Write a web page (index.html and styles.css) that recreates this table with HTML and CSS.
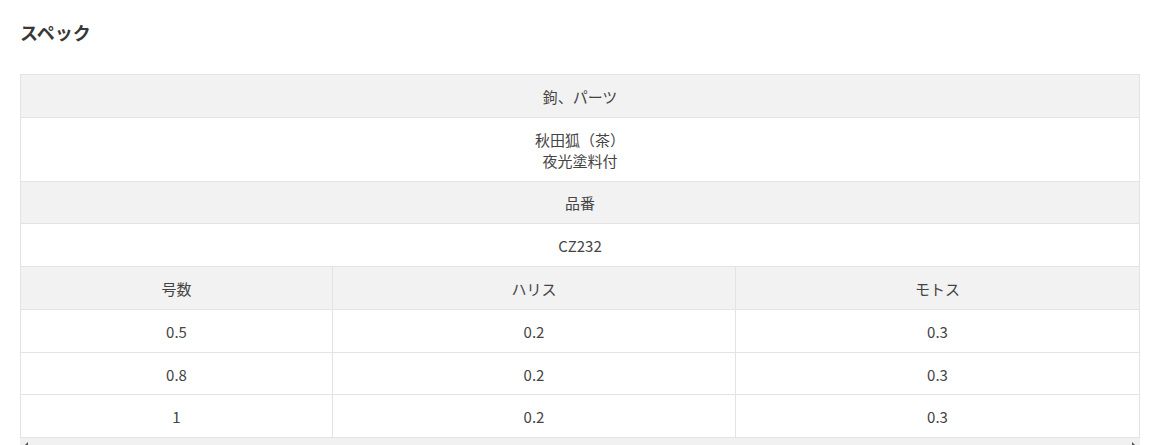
FILE: index.html
```html
<!DOCTYPE html>
<html lang="ja">
<head>
<meta charset="utf-8">
<title>スペック</title>
<link rel="stylesheet" href="styles.css">
</head>
<body>
<div class="page">
  <h2 class="title">スペック</h2>
  <div class="table-wrap">
    <table class="spec">
      <colgroup>
        <col class="c1"><col class="c2"><col class="c3">
      </colgroup>
      <tr class="head"><th colspan="3">鉤、パーツ</th></tr>
      <tr><td colspan="3">秋田狐（茶）<br>夜光塗料付</td></tr>
      <tr class="head"><th colspan="3">品番</th></tr>
      <tr><td colspan="3">CZ232</td></tr>
      <tr class="head"><th>号数</th><th>ハリス</th><th>モトス</th></tr>
      <tr><td>0.5</td><td>0.2</td><td>0.3</td></tr>
      <tr><td>0.8</td><td>0.2</td><td>0.3</td></tr>
      <tr><td>1</td><td>0.2</td><td>0.3</td></tr>
    </table>
    <div class="scrollbar">
      <span class="arrow left"></span>
      <span class="arrow right"></span>
    </div>
  </div>
</div>
</body>
</html>
```
FILE: styles.css
```css
html, body {
  margin: 0;
  padding: 0;
  background: #fff;
}
body {
  font-family: "Noto Sans CJK JP", "Noto Sans", sans-serif;
  color: #444;
}
.page {
  padding: 19px 14px 0 20px;
}
.title {
  margin: 0 0 29px 0;
  font-size: 18px;
  line-height: 26px;
  font-weight: bold;
  color: #383838;
}
.table-wrap {
  width: 1120px;
}
.spec {
  width: 100%;
  border-collapse: collapse;
  table-layout: fixed;
  font-size: 15px;
}
.c1 { width: 312px; }
.c2 { width: 403px; }
.spec th, .spec td {
  border: 1px solid #e3e3e3;
  padding: 10.9px 8px 9.9px;
  line-height: 21px;
  text-align: center;
  font-weight: normal;
}
.head th {
  background: #f2f2f2;
}
.scrollbar {
  position: relative;
  height: 15px;
  background: #f1f1f1;
}
.arrow {
  position: absolute;
  top: 4px;
  width: 0;
  height: 0;
  border-top: 4px solid transparent;
  border-bottom: 4px solid transparent;
}
.arrow.left {
  left: 4px;
  border-right: 4px solid #505050;
}
.arrow.right {
  right: 4px;
  border-left: 4px solid #505050;
}
```
